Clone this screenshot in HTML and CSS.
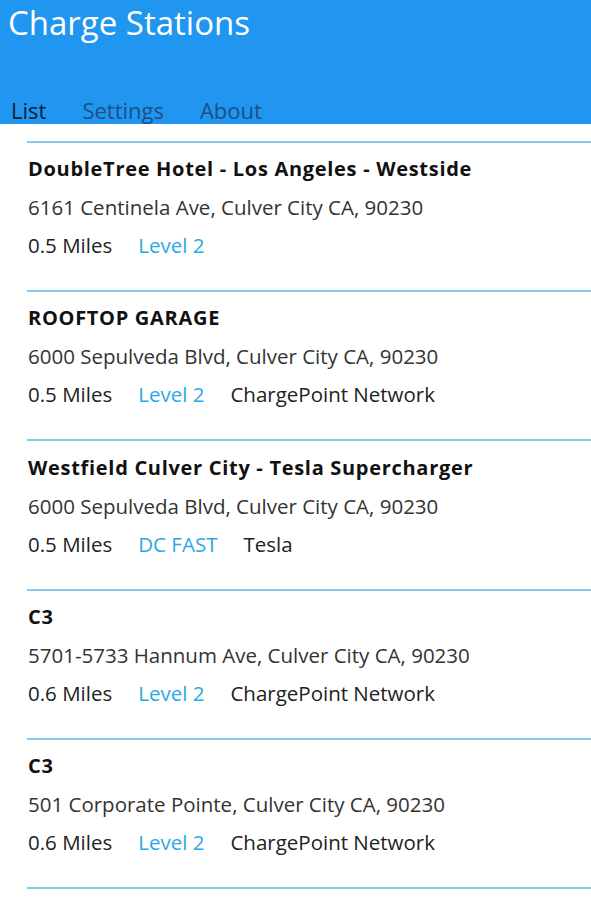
FILE: index.html
```html
<!DOCTYPE html>
<html lang="en">
<head>
<meta charset="utf-8">
<title>Charge Stations</title>
<link rel="stylesheet" href="styles.css">
</head>
<body>
<header class="appbar">
  <h1 class="app-title">Charge Stations</h1>
  <nav class="tabs">
    <span class="tab tab-active">List</span>
    <span class="tab">Settings</span>
    <span class="tab">About</span>
  </nav>
</header>
<main class="stations">
  <section class="station">
    <div class="row name">DoubleTree Hotel - Los Angeles - Westside</div>
    <div class="row addr">6161 Centinela Ave, Culver City CA, 90230</div>
    <div class="row meta"><span>0.5 Miles</span><span class="level">Level 2</span></div>
  </section>
  <section class="station">
    <div class="row name">ROOFTOP GARAGE</div>
    <div class="row addr">6000 Sepulveda Blvd, Culver City CA, 90230</div>
    <div class="row meta"><span>0.5 Miles</span><span class="level">Level 2</span><span>ChargePoint Network</span></div>
  </section>
  <section class="station">
    <div class="row name">Westfield Culver City - Tesla Supercharger</div>
    <div class="row addr">6000 Sepulveda Blvd, Culver City CA, 90230</div>
    <div class="row meta"><span>0.5 Miles</span><span class="level">DC FAST</span><span>Tesla</span></div>
  </section>
  <section class="station">
    <div class="row name">C3</div>
    <div class="row addr">5701-5733 Hannum Ave, Culver City CA, 90230</div>
    <div class="row meta"><span>0.6 Miles</span><span class="level">Level 2</span><span>ChargePoint Network</span></div>
  </section>
  <section class="station">
    <div class="row name">C3</div>
    <div class="row addr">501 Corporate Pointe, Culver City CA, 90230</div>
    <div class="row meta"><span>0.6 Miles</span><span class="level">Level 2</span><span>ChargePoint Network</span></div>
  </section>
  <section class="station station-end"></section>
</main>
</body>
</html>
```
FILE: styles.css
```css
html, body {
  margin: 0;
  padding: 0;
  background: #ffffff;
}
body {
  font-family: "Open Sans", "Noto Sans", sans-serif;
  overflow: hidden;
}
.appbar {
  background: #2196f0;
  height: 124px;
  display: flex;
  flex-direction: column;
}
.app-title {
  margin: 0;
  padding: 0 0 0 8px;
  font-size: 33px;
  font-weight: 400;
  color: #ffffff;
  line-height: normal;
}
.tabs {
  margin-top: auto;
  display: flex;
  padding-left: 11px;
  gap: 36px;
  height: 28px;
}
.tab {
  font-size: 22px;
  line-height: 28px;
  color: #1b4f86;
}
.tab-active {
  color: #0b2238;
}
.stations {
  padding: 17px 0 0 27px;
}
.station {
  border-top: 2px solid #84ccee;
  padding: 7.3px 0 25.9px 1px;
}
.station-end {
  padding: 0;
}
.row {
  font-size: 20.5px;
  line-height: 38px;
  color: #333333;
  white-space: nowrap;
}
.name {
  font-size: 20px;
  font-weight: 700;
  letter-spacing: 0.7px;
  color: #111111;
}
.meta {
  display: flex;
  gap: 26px;
  color: #222222;
}
.level {
  color: #2ba9e6;
}
```
